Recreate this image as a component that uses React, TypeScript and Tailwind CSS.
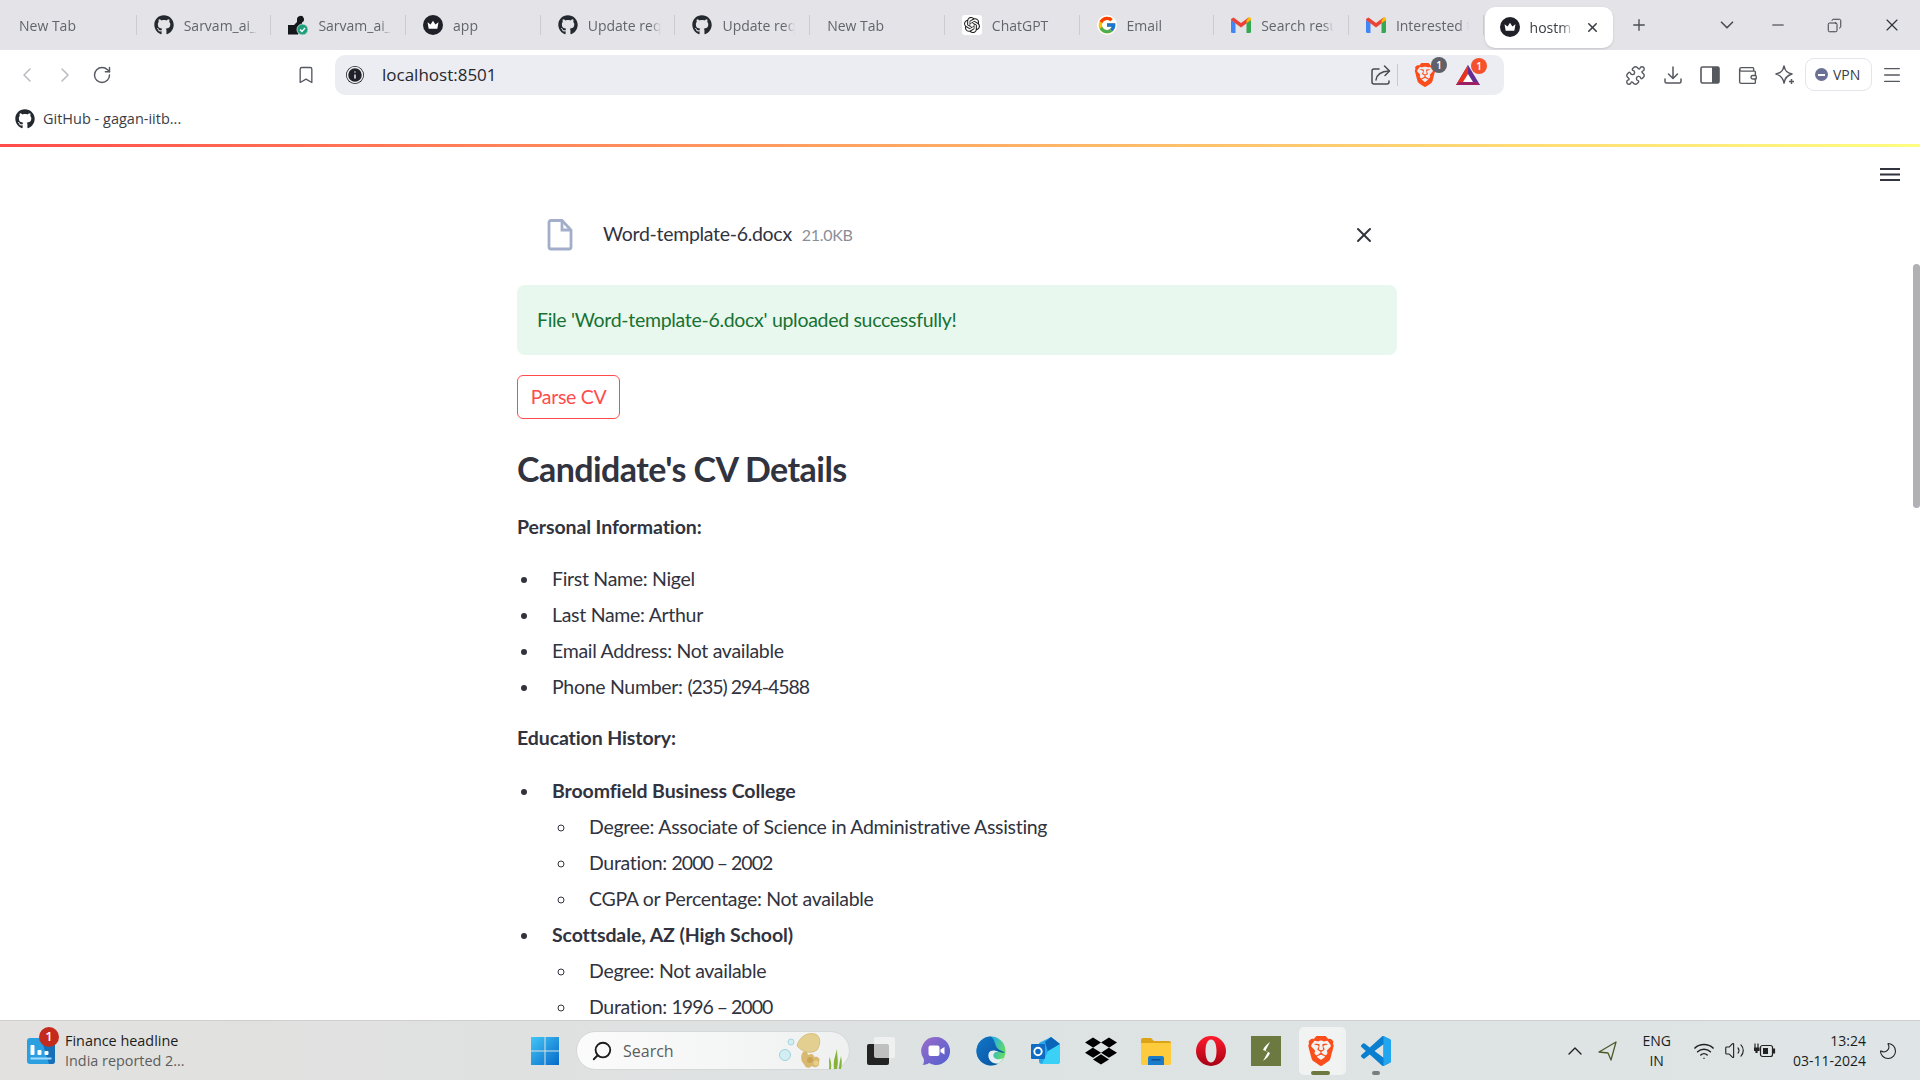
import { ReactNode } from 'react';
import { FaGithub, FaDropbox } from 'react-icons/fa';
import { FcGoogle } from 'react-icons/fc';
import { SiBrave, SiOpenai } from 'react-icons/si';
import {
  Bookmark,
  ChevronDown,
  ChevronLeft,
  ChevronRight,
  ChevronUp,
  Copy,
  Info,
  Menu,
  Minus,
  Moon,
  Plus,
  Puzzle,
  RotateCw,
  Search,
  Volume2,
  Wallet,
  Wifi,
  X,
} from 'lucide-react';

const uiFont = "font-['Open_Sans','Noto_Sans',sans-serif]";
const pageFont = "font-['Lato','Noto_Sans',sans-serif]";

const CrownIcon = ({ size = 20 }: { size?: number }) => (
  <svg width={size} height={size} viewBox="0 0 20 20">
    <circle cx="10" cy="10" r="10" fill="#1f2028" />
    <path d="M4.500 7.200 7.600 9.600 10 5.800l2.400 3.800 3.100-2.400-1.200 6.600H5.700z" fill="#fff" />
  </svg>
);

const GmailIcon = () => (
  <svg width="20" height="16" viewBox="0 0 20 16">
    <path d="M0 3v11.500A1.500 1.500 0 0 0 1.500 16H4.500V6z" fill="#4285f4" />
    <path d="M15.500 6v10h3a1.500 1.500 0 0 0 1.500-1.500V3z" fill="#34a853" />
    <path d="M0 3 10 10.500 20 3V2L17.500.5 10 6 2.500.5 0 2z" fill="#ea4335" />
    <path d="M15.500 3.400 17.500.5A1.600 1.600 0 0 1 20 2v1l-4.500 3z" fill="#fbbc04" />
  </svg>
);

const ChatGptIcon = () => (
  <span className="flex h-[20px] w-[20px] items-center justify-center rounded-[3px] bg-white">
    <SiOpenai size={16} color="#222" />
  </span>
);

const CheckedRepoIcon = () => (
  <svg width="20" height="20" viewBox="0 0 20 20">
    <path d="M0 10h6l3-3V4.500a3.500 3.500 0 1 1 5 3V12l-4 7.500H0z" fill="#16171b" />
    <circle cx="14.500" cy="14.500" r="5.500" fill="#1f9e7c" stroke="#e3e3e8" strokeWidth="0.800" />
    <path d="m12 14.500 2 2 3-3.500" fill="none" stroke="#fff" strokeWidth="1.300" />
  </svg>
);

const SparkIcon = () => (
  <svg width="22" height="22" viewBox="0 0 22 22" fill="none" stroke="#55585f" strokeWidth="1.500">
    <path d="M10 2c.8 4.600 2.600 6.600 8 8-4.600 1.200-7 3.400-8 9-1-5.600-3.400-7.800-8-9 5.400-1.400 7.200-3.400 8-8z" strokeLinejoin="round" />
    <path d="M17.500 15v5M15 17.500h5" />
  </svg>
);

const ShareIcon = () => (
  <svg width="22" height="22" viewBox="0 0 22 22" fill="none" stroke="#494b52" strokeWidth="1.500" strokeLinecap="round" strokeLinejoin="round">
    <path d="M9 5H4a2 2 0 0 0-2 2v11a2 2 0 0 0 2 2h13a2 2 0 0 0 2-2v-1" />
    <path d="M6 16c.6-5 4-8.500 13-9" />
    <path d="M14.500 2 19.500 7l-4.500 4.500" />
  </svg>
);

const BatIcon = () => (
  <svg width="24" height="20" viewBox="0 0 24 20">
    <path d="M12 0 24 20H0z" fill="#662d91" />
    <path d="M12 0 0 20h6.500L12 9z" fill="#e8341c" />
    <path d="M12 9 17 17H7z" fill="#fff" />
    <path d="M0 20h24l-3-3H3z" fill="#9e1f63" />
  </svg>
);

const DownloadIcon = () => (
  <svg width="20" height="20" viewBox="0 0 20 20" fill="none" stroke="#55585f" strokeWidth="1.500" strokeLinecap="round" strokeLinejoin="round">
    <path d="M10 2v11M5.500 9 10 13.500 14.500 9" />
    <path d="M2 14v2.500A1.500 1.500 0 0 0 3.500 18h13a1.500 1.500 0 0 0 1.500-1.500V14" />
  </svg>
);

const SidebarIcon = () => (
  <svg width="20" height="20" viewBox="0 0 20 20">
    <rect x="1" y="2" width="18" height="16" rx="1.500" fill="none" stroke="#55585f" strokeWidth="1.600" />
    <rect x="12" y="2" width="7" height="16" fill="#55585f" />
  </svg>
);

const PageMenuIcon = () => (
  <svg width="20" height="13" viewBox="0 0 20 13" stroke="#31333f" strokeWidth="2" className="block">
    <path d="M0 1h20M0 6.500h20M0 12h20" />
  </svg>
);

const VsCodeIcon = () => (
  <svg width="30" height="30" viewBox="0 0 24 24">
    <path d="M23.150 2.587 18.210.21a1.494 1.494 0 0 0-1.705.29l-9.460 8.630-4.120-3.128a.999.999 0 0 0-1.276.057L.327 7.261A1 1 0 0 0 .326 8.740L3.899 12 .326 15.260a1 1 0 0 0 .001 1.479L1.650 17.940a.999.999 0 0 0 1.276.057l4.120-3.128 9.460 8.630a1.492 1.492 0 0 0 1.704.29l4.942-2.377A1.500 1.500 0 0 0 24 20.060V3.939a1.500 1.500 0 0 0-.850-1.352zm-5.146 14.861L10.826 12l7.178-5.448v10.896z" fill="#0a7fd0" />
    <path d="M18 .1c.2 0 .2.1.2.1l4.950 2.387A1.500 1.500 0 0 1 24 3.939V20.060a1.500 1.500 0 0 1-.850 1.353l-4.950 2.377c-.1.100-.2.100-.2.100V17.400l.004.048V6.552L18 6.500z" fill="#23a6f0" />
  </svg>
);

const WindowsIcon = () => (
  <svg width="30" height="30" viewBox="0 0 30 30">
    <defs>
      <linearGradient id="win" x1="0" y1="0" x2="1" y2="1">
        <stop offset="0" stopColor="#43c6f7" />
        <stop offset="1" stopColor="#0669c9" />
      </linearGradient>
    </defs>
    <path d="M1 1h13.500v13.500H1zM15.500 1H29v13.500H15.500zM1 15.500h13.500V29H1zM15.500 15.500H29V29H15.500z" fill="url(#win)" />
  </svg>
);

const TaskViewIcon = () => (
  <svg width="30" height="30" viewBox="0 0 30 30">
    <rect x="1" y="8" width="22" height="21" rx="2" fill="#232323" />
    <rect x="8" y="1" width="21" height="21" rx="2" fill="#f4f4f4" fillOpacity="0.750" />
  </svg>
);

const MeetIcon = () => (
  <svg width="30" height="30" viewBox="0 0 30 30">
    <defs>
      <linearGradient id="meet" x1="0" y1="0" x2="1" y2="1">
        <stop offset="0" stopColor="#9b6dc9" />
        <stop offset="1" stopColor="#4f5fd0" />
      </linearGradient>
    </defs>
    <path d="M15 1a14 14 0 1 1-7 26.100C6 28.500 4 29 1.500 29c1.200-1.500 1.700-3.400 1.300-6A14 14 0 0 1 15 1z" fill="url(#meet)" />
    <rect x="7.500" y="9.500" width="11" height="10.500" rx="2" fill="#fff" />
    <path d="m19.500 13.500 4-2.500v7.500l-4-2.500z" fill="#fff" />
  </svg>
);

const EdgeIcon = () => (
  <svg width="30" height="30" viewBox="0 0 30 30">
    <defs>
      <linearGradient id="edgeA" x1="0" y1="0" x2="1" y2="0.300">
        <stop offset="0" stopColor="#0f6fc0" />
        <stop offset="0.600" stopColor="#2fb5d6" />
        <stop offset="1" stopColor="#5fd968" />
      </linearGradient>
      <linearGradient id="edgeB" x1="0" y1="0" x2="1" y2="1">
        <stop offset="0" stopColor="#1177c9" />
        <stop offset="1" stopColor="#0b4f9c" />
      </linearGradient>
    </defs>
    <circle cx="15" cy="15" r="14.500" fill="url(#edgeA)" />
    <path d="M15 .5A14.500 14.500 0 0 0 .5 15c0 8 6.500 14.500 14.500 14.500 3 0 5.500-.8 7.500-2.200-7 1.200-11-4-9.500-8.300 1-3 4-4.500 7-4 3.500.5 5 2 8.800 1.600-.5-1-6-2-8-5C19 9 19 4 15 .5z" fill="url(#edgeB)" />
    <path d="M12.500 18c-.8 5 3 10 9.500 9.500 2-1.200 4-3 5-5.500-6 3-10.500 0-9.500-3.500.8-2.500 3.500-3 5-2.500-3.500-2.500-9.500-2-10 2z" fill="#e8edf2" />
  </svg>
);

const OutlookIcon = () => (
  <svg width="30" height="30" viewBox="0 0 30 30">
    <path d="M8 7 20 1l9 7v17a3 3 0 0 1-3 3H11a3 3 0 0 1-3-3z" fill="#28a8ea" />
    <path d="M14 6 20 1l9 7-12 8z" fill="#0a64b8" />
    <path d="M29 8v17a3 3 0 0 1-3 3H11l6-13z" fill="#3bd0f5" />
    <rect x="0" y="8" width="14" height="15" rx="1" fill="#0f6cc4" />
    <circle cx="7" cy="15.500" r="3.700" fill="none" stroke="#fff" strokeWidth="1.900" />
  </svg>
);

const FolderIcon = () => (
  <svg width="30" height="28" viewBox="0 0 30 28">
    <path d="M0 3a2 2 0 0 1 2-2h8l3 3h15a2 2 0 0 1 2 2v4H0z" fill="#dca317" />
    <path d="M0 6h30v20a2 2 0 0 1-2 2H2a2 2 0 0 1-2-2z" fill="#fdcb3c" />
    <path d="M7 21a2 2 0 0 1 2-2h12a2 2 0 0 1 2 2v7H7z" fill="#1a7bc9" />
    <rect x="10.500" y="22" width="9" height="1.500" fill="#0d4f90" />
  </svg>
);

const OperaIcon = () => (
  <svg width="30" height="30" viewBox="0 0 30 30">
    <defs>
      <linearGradient id="op" x1="0" y1="0" x2="0" y2="1">
        <stop offset="0" stopColor="#ff1b2d" />
        <stop offset="1" stopColor="#a70014" />
      </linearGradient>
    </defs>
    <path fillRule="evenodd" d="M15 0a15 15 0 1 1 0 30 15 15 0 0 1 0-30zm0 3.500c-3.800 0-5.500 5.200-5.500 11.500s1.700 11.500 5.500 11.500 5.500-5.200 5.500-11.500S18.800 3.500 15 3.500z" fill="url(#op)" />
  </svg>
);

const SublimeTile = () => (
  <svg width="30" height="30" viewBox="0 0 30 30">
    <rect width="30" height="30" fill="#6c7a41" />
    <path d="M19 6c-3 2-6 5-7 8l5 2-5 9c3-2 6-5 7-8l-4.500-2.500z" fill="#fff" />
  </svg>
);

const FinanceIcon = () => (
  <svg width="28" height="28" viewBox="0 0 28 28">
    <rect y="1" width="28" height="26" rx="3" fill="#2b9fe0" />
    <path d="M14 1h11a3 3 0 0 1 3 3v20a3 3 0 0 1-3 3h-3z" fill="#176fb8" />
    <rect x="3.500" y="8" width="4" height="10" rx="1" fill="#fff" />
    <rect x="10.500" y="13" width="4" height="5" rx="1" fill="#fff" />
    <rect x="17.500" y="14" width="4" height="4" rx="1" fill="#fff" />
    <rect x="3.500" y="20.500" width="21" height="2" fill="#9fdcff" />
  </svg>
);

const JellyfishArt = () => (
  <svg width="68" height="38" viewBox="0 0 68 38">
    <circle cx="6" cy="23" r="5.500" fill="#d3eef2" stroke="#9fd1dc" />
    <circle cx="12" cy="10" r="3" fill="#d3eef2" stroke="#a8d4de" />
    <path d="M18 14C20 5 28 0 36 2c6 2 6 10 2 16-5 4-14 3-20-4z" fill="#e3cf90" stroke="#c9ad62" strokeWidth="0.600" />
    <path d="M24 20c2-2 5 0 5 3 3-2 6-1 6 2 4-1 7 2 5 5 1 4-3 7-7 4-3 3-7 2-8-2-3-2-4-8-1-12z" fill="#d8b96f" />
    <circle cx="31" cy="28" r="3" fill="#c9a455" />
    <circle cx="37" cy="31" r="2.500" fill="#e6cf8d" />
    <path d="M50 37c1-6-1-8 1-12 0 4 2 5 1 12zM55 37c-1-8 1-12 3-20 0 8 2 12 0 20zM60 37c0-5 1-8 2-13 1 5 1 9 0 13z" fill="#86b23c" />
  </svg>
);

const LocationIcon = () => (
  <svg width="20" height="22" viewBox="0 0 20 22" fill="none" stroke="#4d5a2a" strokeWidth="1.300" strokeLinejoin="round">
    <path d="M1 12 18 2l-5 18-3-7z" />
  </svg>
);

const BatteryPlugIcon = () => (
  <svg width="22" height="18" viewBox="0 0 22 18" fill="none" stroke="#222" strokeWidth="1.200">
    <rect x="6.500" y="3.500" width="12" height="11" rx="2" />
    <rect x="9" y="6" width="5" height="6" fill="#222" stroke="none" />
    <path d="M18.500 7h2v4h-2" fill="#222" />
    <path d="M1 1.500v4M4 1.500v4M0 6h5v2.500H3v2H2v-2H0z" fill="#222" />
  </svg>
);

interface TabInfo {
  title: string;
  icon?: ReactNode;
}

const TABS: TabInfo[] = [
  { title: 'New Tab' },
  { title: 'Sarvam_ai_', icon: <FaGithub size={20} color="#24292f" /> },
  { title: 'Sarvam_ai_', icon: <CheckedRepoIcon /> },
  { title: 'app', icon: <CrownIcon /> },
  { title: 'Update req', icon: <FaGithub size={20} color="#24292f" /> },
  { title: 'Update req', icon: <FaGithub size={20} color="#24292f" /> },
  { title: 'New Tab' },
  { title: 'ChatGPT', icon: <ChatGptIcon /> },
  { title: 'Email', icon: <FcGoogle size={20} className="rounded-full bg-white" /> },
  { title: 'Search resu', icon: <GmailIcon /> },
  { title: 'Interested t', icon: <GmailIcon /> },
];

const Tab = ({ title, icon }: TabInfo) => (
  <div className="flex h-[20px] w-[134.700px] shrink-0 items-center border-r border-[#cbccd2] pl-[17px]">
    {icon && <span className="mr-[10px] flex w-[20px] shrink-0 justify-center">{icon}</span>}
    <span className="w-[73px] shrink-0 overflow-hidden whitespace-nowrap text-[14px] text-[#63656c] [mask-image:linear-gradient(90deg,#000_85%,transparent)]">
      {title}
    </span>
  </div>
);

const TabBar = () => (
  <div className="flex h-[50px] items-center bg-[#e3e3e8] pl-[2px]">
    {TABS.map((t, i) => (
      <Tab key={i} {...t} />
    ))}
    <div className="-mb-[4px] ml-[1px] flex h-[41px] w-[128px] shrink-0 items-center rounded-[10px] bg-white pl-[15px] shadow-sm">
      <CrownIcon />
      <span className="ml-[10px] w-[44px] overflow-hidden whitespace-nowrap text-[14px] text-[#3b3d44] [mask-image:linear-gradient(90deg,#000_70%,transparent)]">
        hostm
      </span>
      <X size={15} strokeWidth={2.500} color="#3b3d44" className="ml-[11px]" />
    </div>
    <Plus size={18} color="#4b4d54" strokeWidth={1.800} className="ml-[17px]" />
    <ChevronDown size={22} color="#4b4d54" strokeWidth={1.800} className="ml-[68px]" />
    <Minus size={18} color="#30323a" strokeWidth={1.500} className="ml-[31px]" />
    <Copy size={15} color="#30323a" strokeWidth={1.500} className="ml-[40px] -scale-x-100" />
    <X size={20} color="#30323a" strokeWidth={1.400} className="ml-[40px]" />
  </div>
);

const ToolbarButton = ({ children, width = 'w-[38px]' }: { children: ReactNode; width?: string }) => (
  <div className={`flex h-[40px] shrink-0 items-center justify-center ${width}`}>{children}</div>
);

const Toolbar = () => (
  <div className="flex h-[50px] items-start bg-white pl-[8px] pt-[5px]">
    <ToolbarButton>
      <ChevronLeft size={24} color="#b9bbc1" strokeWidth={1.500} />
    </ToolbarButton>
    <ToolbarButton>
      <ChevronRight size={24} color="#b9bbc1" strokeWidth={1.500} />
    </ToolbarButton>
    <ToolbarButton width="w-[36px]">
      <RotateCw size={20} color="#55585f" strokeWidth={1.700} />
    </ToolbarButton>
    <div className="w-[167px] shrink-0" />
    <ToolbarButton>
      <Bookmark size={20} color="#55585f" strokeWidth={1.600} />
    </ToolbarButton>
    <div className="ml-[10px] flex h-[40px] w-[1169px] shrink-0 items-center rounded-[10px] bg-[#ecedf2] pl-[11px]">
      <span className="flex h-[18px] w-[18px] items-center justify-center rounded-full bg-[#1f2028] text-white">
        <Info size={20} strokeWidth={2} color="#ecedf2" fill="#1f2028" />
      </span>
      <span className="ml-[18px] text-[17px] text-[#26282e]">localhost:8501</span>
      <span className="ml-auto">
        <ShareIcon />
      </span>
      <span className="ml-[5px] h-[22px] w-px bg-[#c9cad0]" />
      <span className="relative ml-[15px] block">
        <SiBrave size={24} color="#fb4e1a" />
        <span className="absolute -right-[10px] -top-[6px] flex h-[16px] w-[16px] items-center justify-center rounded-full bg-[#5f6068] text-[10px] font-semibold text-white">1</span>
      </span>
      <span className="relative ml-[19px] block">
        <BatIcon />
        <span className="absolute -right-[7px] -top-[7px] flex h-[16px] w-[16px] items-center justify-center rounded-full bg-[#f4512c] text-[10px] font-semibold text-white">1</span>
      </span>
      <span className="w-[24px] shrink-0" />
    </div>
    <div className="w-[112px] shrink-0" />
    <ToolbarButton>
      <Puzzle size={21} color="#55585f" strokeWidth={1.600} />
    </ToolbarButton>
    <ToolbarButton width="w-[37px]">
      <DownloadIcon />
    </ToolbarButton>
    <ToolbarButton width="w-[37px]">
      <SidebarIcon />
    </ToolbarButton>
    <ToolbarButton width="w-[38px]">
      <Wallet size={21} color="#55585f" strokeWidth={1.600} />
    </ToolbarButton>
    <ToolbarButton width="w-[37px]">
      <SparkIcon />
    </ToolbarButton>
    <div className="ml-[2px] mt-[3px] flex h-[33px] w-[67px] shrink-0 items-center gap-[5px] rounded-[9px] border border-[#e4e5ea] pl-[9px] text-[14px] text-[#3b3d44]">
      <span className="flex h-[13px] w-[13px] items-center justify-center rounded-full bg-[#6b7196]">
        <span className="h-[2px] w-[7px] bg-white" />
      </span>
      VPN
    </div>
    <ToolbarButton width="w-[39px]">
      <Menu size={22} color="#55585f" strokeWidth={1.400} />
    </ToolbarButton>
  </div>
);

const BookmarkBar = () => (
  <div className="flex h-[44px] items-center bg-white pb-[7px] pl-[15px]">
    <FaGithub size={20} color="#24292f" />
    <span className="ml-[8px] text-[14.500px] text-[#3b3d44]">GitHub - gagan-iitb...</span>
  </div>
);

const FileRow = () => (
  <div className="flex h-[60px] items-center">
    <svg width="26" height="32" viewBox="0 0 26 32" className="ml-[30px]" fill="none" stroke="#a3aecb" strokeWidth="2.800">
      <path d="M2 3.500A2 2 0 0 1 4 1.500h11L24 11v17a2 2 0 0 1-2 2H4a2 2 0 0 1-2-2z" />
      <path d="M15 1.500V11h9" />
    </svg>
    <span className="ml-[30px] -translate-y-px text-[#31333f]">Word-template-6.docx</span>
    <span className="ml-[10px] text-[16px] text-[#8c8e97]">21.0KB</span>
    <X size={24} strokeWidth={2} color="#31333f" className="ml-auto mr-[21px]" />
  </div>
);

const Digits = ({ children }: { children: ReactNode }) => <span className="tracking-[-1px]">{children}</span>;

const Main = () => (
  <div className="relative flex-1 overflow-hidden bg-white">
    <div className="h-[3px] bg-gradient-to-r from-[#ff4b4b] to-[#fffd80]" />
    <span className="absolute right-[20px] top-[24px]">
      <PageMenuIcon />
    </span>
    <div className="absolute right-0 top-[120px] h-[244px] w-[7px] rounded-[4px] bg-[#b0b0b5]" />

    <div className={`ml-[517px] w-[880px] pt-[58px] text-[19.500px] tracking-[-0.300px] text-[#31333f] ${pageFont}`}>
      <FileRow />
      <div className="mt-[20px] flex h-[70px] items-center rounded-[8px] bg-[#e8f8ee] pl-[20px] text-[#177233]">
        File 'Word-template-6.docx' uploaded successfully!
      </div>
      <button className="mt-[20px] h-[44px] w-[103px] rounded-[6px] border border-[#ff4b4b] bg-white text-[#ff4b4b]">
        Parse CV
      </button>
      <h3 className="mt-[24px] text-[34px] font-bold leading-[52px] tracking-[-0.550px]">Candidate's CV Details</h3>
      <p className="mt-[14px] font-bold leading-[36px] tracking-[-0.100px]">Personal Information:</p>
      <ul className="mt-[16px] list-disc pl-[23px] leading-[36px]">
        <li className="pl-[12px]">First Name: Nigel</li>
        <li className="pl-[12px]">Last Name: Arthur</li>
        <li className="pl-[12px]">Email Address: Not available</li>
        <li className="pl-[12px]">
          Phone Number: <Digits>(235) 294-4588</Digits>
        </li>
      </ul>
      <p className="mt-[15px] font-bold leading-[36px] tracking-[-0.100px]">Education History:</p>
      <ul className="mt-[17px] list-disc pl-[23px] leading-[36px]">
        <li className="pl-[12px]">
          <strong className="font-bold tracking-[-0.100px]">Broomfield Business College</strong>
          <ul className="list-[circle] pl-[25px]">
            <li className="pl-[12px]">Degree: Associate of Science in Administrative Assisting</li>
            <li className="pl-[12px]">
              Duration: <Digits>2000 – 2002</Digits>
            </li>
            <li className="pl-[12px]">CGPA or Percentage: Not available</li>
          </ul>
        </li>
        <li className="pl-[12px]">
          <strong className="font-bold tracking-[-0.100px]">Scottsdale, AZ (High School)</strong>
          <ul className="list-[circle] pl-[25px]">
            <li className="pl-[12px]">Degree: Not available</li>
            <li className="pl-[12px]">
              Duration: <Digits>1996 – 2000</Digits>
            </li>
          </ul>
        </li>
      </ul>
    </div>
  </div>
);

const TaskbarSlot = ({ children }: { children: ReactNode }) => (
  <div className="relative flex h-[60px] w-[55px] shrink-0 items-center justify-center">{children}</div>
);

const Taskbar = () => (
  <div className="flex h-[60px] shrink-0 items-center border-t border-[#cfcfcf] bg-gradient-to-r from-[#e2e1df] via-[#dde2e2] to-[#dfe5e6]">
    <div className="flex w-[530px] shrink-0 items-center pl-[27px]">
      <div className="relative">
        <FinanceIcon />
        <span className="absolute -right-[4px] -top-[10px] flex h-[20px] w-[20px] items-center justify-center rounded-full bg-[#c42b1c] text-[13px] font-semibold text-white">1</span>
      </div>
      <div className="ml-[10px] text-[14.400px] leading-[20px]">
        <div className="text-[#1c1c1c]">Finance headline</div>
        <div className="text-[#5d5d5d]">India reported 2...</div>
      </div>
    </div>
    <WindowsIcon />
    <div className="ml-[16px] mr-[3px] flex h-[39px] w-[274px] shrink-0 items-center rounded-full border border-[#d5d8d8] bg-gradient-to-r from-[#fbfbfb] to-[#eff1f0] pl-[14px] pr-[2px]">
      <Search size={22} strokeWidth={2} color="#1c1c1c" className="-scale-x-100" />
      <span className="ml-[10px] text-[16px] text-[#5d5d5d]">Search</span>
      <span className="ml-auto">
        <JellyfishArt />
      </span>
    </div>
    <TaskbarSlot>
      <TaskViewIcon />
    </TaskbarSlot>
    <TaskbarSlot>
      <MeetIcon />
    </TaskbarSlot>
    <TaskbarSlot>
      <EdgeIcon />
    </TaskbarSlot>
    <TaskbarSlot>
      <OutlookIcon />
    </TaskbarSlot>
    <TaskbarSlot>
      <FaDropbox size={32} color="#000" />
    </TaskbarSlot>
    <TaskbarSlot>
      <FolderIcon />
    </TaskbarSlot>
    <TaskbarSlot>
      <OperaIcon />
    </TaskbarSlot>
    <TaskbarSlot>
      <SublimeTile />
    </TaskbarSlot>
    <TaskbarSlot>
      <div className="flex h-[48px] w-[44px] items-center justify-center rounded-[5px] bg-[#f1f3f3] shadow-[3px_0_0_#f0f1f1]">
        <SiBrave size={30} color="#fb4e1a" />
      </div>
      <span className="absolute bottom-[6px] h-[4px] w-[19px] rounded-full bg-[#6c7a41]" />
    </TaskbarSlot>
    <TaskbarSlot>
      <VsCodeIcon />
      <span className="absolute bottom-[6px] h-[4px] w-[8px] rounded-full bg-[#7a7d80]" />
    </TaskbarSlot>
    <div className="ml-auto flex items-center pr-[22px] text-[#1c1c1c]">
      <ChevronUp size={24} strokeWidth={1.400} color="#222" />
      <span className="ml-[11px]">
        <LocationIcon />
      </span>
      <div className="ml-[24px] text-center text-[14px] leading-[20px]">
        ENG
        <br />
        IN
      </div>
      <Wifi size={22} strokeWidth={1.600} color="#222" className="ml-[22px]" />
      <Volume2 size={21} strokeWidth={1.300} color="#222" className="ml-[9px]" />
      <span className="ml-[9px]">
        <BatteryPlugIcon />
      </span>
      <div className="ml-[17px] text-right text-[14px] leading-[20px]">
        13:24
        <br />
        03-11-2024
      </div>
      <Moon size={20} strokeWidth={1.300} color="#222" className="ml-[12px] -scale-x-100" />
    </div>
  </div>
);

const App = () => {
  return (
    <div className={`flex h-screen w-screen flex-col overflow-hidden bg-white ${uiFont}`}>
      <TabBar />
      <Toolbar />
      <BookmarkBar />
      <Main />
      <Taskbar />
    </div>
  );
};

export default App;
